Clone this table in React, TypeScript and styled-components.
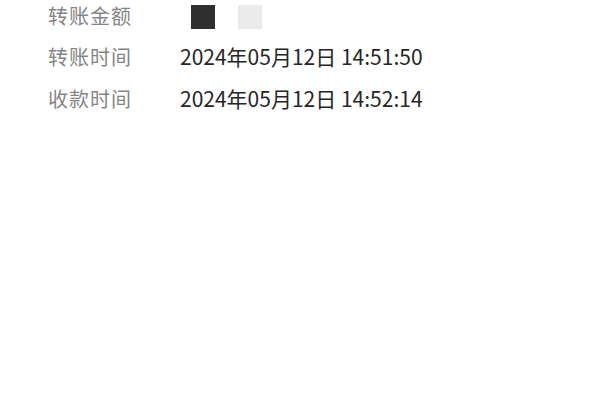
import React from "react";
import styled, { createGlobalStyle } from "styled-components";

const Global = createGlobalStyle`
  html, body { margin: 0; padding: 0; background: #ffffff; }
  body { font-family: "Noto Sans CJK SC", "Noto Sans", sans-serif; overflow: hidden; }
`;

const Page = styled.div`
  width: 600px;
  height: 400px;
  background: #ffffff;
  overflow: hidden;
`;

const List = styled.div`
  display: flex;
  flex-direction: column;
  margin-top: -5px;
  padding-left: 48px;
`;

const Row = styled.div`
  display: grid;
  grid-template-columns: 132px 1fr;
  align-items: center;
  height: 41.5px;
`;

const Label = styled.span`
  font-size: 20px;
  letter-spacing: 1px;
  color: #858585;
  line-height: 1;
`;

const Value = styled.span`
  font-family: "Noto Sans CJK SC", "Noto Sans", sans-serif;
  font-size: 21px;
  color: #262626;
  line-height: 1;
  white-space: nowrap;
  margin-top: -1px;
`;

const Masked = styled.div`
  display: flex;
  gap: 23px;
  padding-left: 11px;
  margin-top: 3px;
`;

const Block = styled.div<{ $tone: string }>`
  width: 24px;
  height: 24px;
  background: ${(p) => p.$tone};
  filter: blur(0.4px);
`;

export default function App() {
  return (
    <Page>
      <Global />
      <List>
        <Row>
          <Label>转账金额</Label>
          <Masked>
            <Block $tone="#2f2f2f" />
            <Block $tone="#ebebeb" />
          </Masked>
        </Row>
        <Row>
          <Label>转账时间</Label>
          <Value>2024年05月12日 14:51:50</Value>
        </Row>
        <Row>
          <Label>收款时间</Label>
          <Value>2024年05月12日 14:52:14</Value>
        </Row>
      </List>
    </Page>
  );
}
